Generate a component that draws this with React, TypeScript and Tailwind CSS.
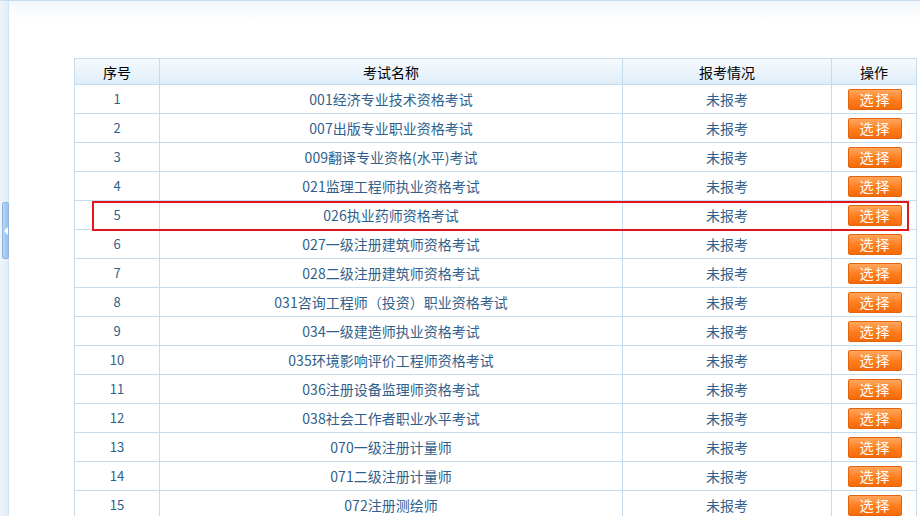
import React from 'react';

const exams = [
  '001经济专业技术资格考试',
  '007出版专业职业资格考试',
  '009翻译专业资格(水平)考试',
  '021监理工程师执业资格考试',
  '026执业药师资格考试',
  '027一级注册建筑师资格考试',
  '028二级注册建筑师资格考试',
  '031咨询工程师（投资）职业资格考试',
  '034一级建造师执业资格考试',
  '035环境影响评价工程师资格考试',
  '036注册设备监理师资格考试',
  '038社会工作者职业水平考试',
  '070一级注册计量师',
  '071二级注册计量师',
  '072注册测绘师',
];

function SelectButton() {
  return (
    <button className="w-[54px] h-[21px] border border-[#e2640f] rounded-[2px] bg-gradient-to-b from-[#ffa65a] via-[#ff7f1f] to-[#f56a05] text-white text-[14px] leading-[19px] tracking-[2px] pl-[2px]">
      选择
    </button>
  );
}

export default function App() {
  return (
    <div
      className="w-[920px] h-[516px] overflow-hidden bg-white flex border-t border-[#c7dcee]"
      style={{ fontFamily: '"Noto Sans CJK SC", "Noto Sans", sans-serif' }}
    >
      {/* left collapse strip */}
      <div className="relative w-[9px] shrink-0 bg-gradient-to-r from-[#eef4fa] to-[#e2edf8] border-r border-[#d3e3f1]">
        <div className="absolute left-[2px] top-[201px] w-[7px] h-[57px] rounded-[2px] bg-gradient-to-r from-[#b9d4f2] to-[#9cc0ea] border border-[#8eb5e2] flex items-center justify-center">
          <div className="w-0 h-0 border-y-[4px] border-y-transparent border-r-[4px] border-r-white" />
        </div>
      </div>

      {/* main */}
      <div className="flex-1 bg-gradient-to-b from-[#f2f7fc] via-white to-white bg-[length:100%_40px] bg-no-repeat pt-[57px] pl-[65px]">
        <div className="relative w-[842px]">
          <table className="border-collapse table-fixed w-[842px] text-[14px]">
            <colgroup>
              <col className="w-[85px]" />
              <col className="w-[463px]" />
              <col className="w-[209px]" />
              <col className="w-[85px]" />
            </colgroup>
            <thead>
              <tr className="h-[26px] bg-gradient-to-b from-[#f7fafd] to-[#deedf9]">
                {['序号', '考试名称', '报考情况', '操作'].map((h) => (
                  <th key={h} className="border border-[#c5dcec] font-normal text-black text-center p-0 leading-[24px]">
                    {h}
                  </th>
                ))}
              </tr>
            </thead>
            <tbody>
              {exams.map((name, i) => (
                <tr key={name} className="h-[29px]">
                  <td className="border border-[#c5dcec] text-center text-[#2f5f8c] p-0 text-[13px]">{i + 1}</td>
                  <td className="border border-[#c5dcec] text-center text-[#2f5f8c] p-0">{name}</td>
                  <td className="border border-[#c5dcec] text-center text-[#2f5f8c] p-0">未报考</td>
                  <td className="border border-[#c5dcec] text-center p-0 align-middle">
                    <div className="flex justify-center pl-[1px]">
                      <SelectButton />
                    </div>
                  </td>
                </tr>
              ))}
            </tbody>
          </table>
          {/* highlight box over row 5 */}
          <div className="absolute left-[18px] top-[143px] w-[817px] h-[30px] border-2 border-[#e3171b] pointer-events-none" />
        </div>
      </div>
    </div>
  );
}
